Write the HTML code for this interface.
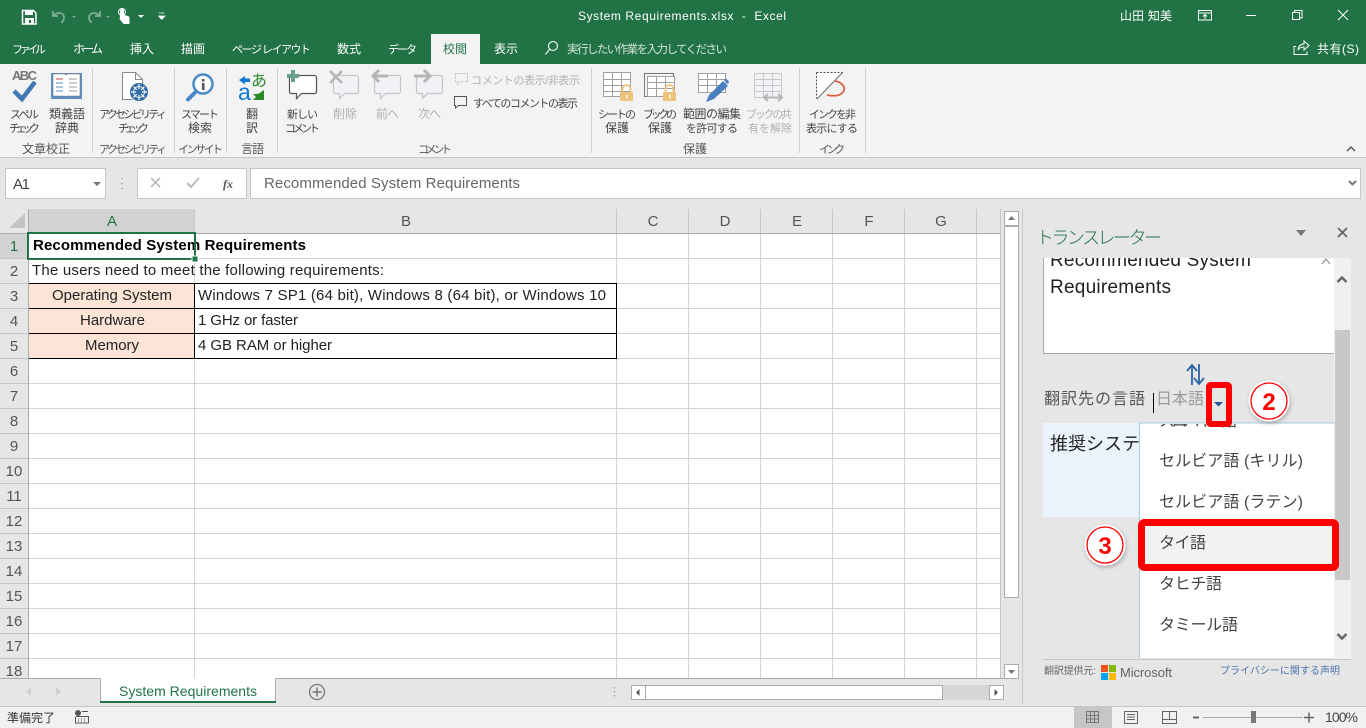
<!DOCTYPE html>
<html lang="ja">
<head>
<meta charset="utf-8">
<title>System Requirements.xlsx - Excel</title>
<style>
html,body{margin:0;padding:0;width:1366px;height:728px;overflow:hidden;background:#e6e6e6}
svg{display:block;position:absolute;left:0;top:0}
text{font-family:"Liberation Sans","Noto Sans CJK JP",sans-serif;font-size:12px;fill:#444;white-space:pre}
.w{fill:#fff}
.t{font-size:12px;fill:#fff}
.r{font-size:12px;fill:#444}
.d{font-size:12px;fill:#b1b1b1}
.g{font-size:12px;fill:#555}
.r.k,.d.k,.g.k,.t.k{font-size:11px}
.h{font-size:15px;fill:#555;text-anchor:middle}
.c{font-size:15px;fill:#222}
.m{text-anchor:middle}
.p{font-size:16px;fill:#444}
</style>
</head>
<body>
<svg width="1366" height="728" viewBox="0 0 1366 728" xmlns="http://www.w3.org/2000/svg">
<defs>
<clipPath id="cb"><rect x="1043" y="258" width="291" height="96"/></clipPath>
<clipPath id="cd"><rect x="1140" y="424" width="194" height="234"/></clipPath>
<clipPath id="ct"><rect x="1043" y="423" width="96" height="94"/></clipPath>
<filter id="sh" x="-30%" y="-30%" width="160%" height="160%"><feDropShadow dx="1" dy="2" stdDeviation="2" flood-color="#000" flood-opacity=".25"/></filter>
</defs>

<!-- title bar -->
<rect x="0" y="0" width="1366" height="64" fill="#217346"/>
<rect x="431" y="34" width="49" height="30" fill="#f3f3f3"/>
<!-- QAT -->
<path d="M22.500 10.500h11l2.500 2.500v11h-13.500z" fill="none" stroke="#fff" stroke-width="1.500"/>
<rect x="25" y="11" width="8" height="4" fill="#fff"/><rect x="25" y="18" width="9" height="6" fill="#fff"/><rect x="29" y="20" width="2" height="3" fill="#217346"/>
<path d="M53 11v5h5M54 15.500c3-4 10-3 10 2 0 2-1 4-3 5" fill="none" stroke="#7fad96" stroke-width="1.800"/>
<path d="M72 16l4 0-2 2z" fill="#7fad96"/>
<path d="M100 11v5h-5M99 15.500c-3-4-10-3-10 2 0 2 1 4 3 5" fill="none" stroke="#7fad96" stroke-width="1.800"/>
<path d="M106 16l4 0-2 2z" fill="#7fad96"/>
<path d="M120 17v-6a2 2 0 0 1 4 0v4l4 1c1.500.500 1.500 2 1.500 3v5h-6l-4-5z" fill="#fff"/><circle cx="122" cy="12" r="3.500" fill="none" stroke="#fff"/>
<path d="M138 15h6l-3 3z" fill="#fff"/>
<path d="M159 13h5.500M158.500 16h6.500l-3.200 3.500z" fill="#fff" stroke="#fff" stroke-width=".7"/>
<text class="t" x="578" y="20" textLength="208">System Requirements.xlsx  -  Excel</text>
<text class="t" x="1120" y="20" textLength="52">山田 知美</text>
<path d="M1198.500 10.500h13v9.500h-13zM1198.500 13h13M1205 19v-4M1203 16.500l2-2 2 2" fill="none" stroke="#fff"/>
<path d="M1246 15.500h10" stroke="#fff"/>
<path d="M1292.500 12.500h7v7h-7zM1294.500 12.500v-2h7.500v7.500h-2.500" fill="none" stroke="#fff"/>
<path d="M1338 10l10 10M1348 10l-10 10" stroke="#fff" fill="none"/>
<!-- tabs -->
<text class="t k" x="12" y="53" textLength="34">ファイル</text>
<text class="t" x="73" y="53" textLength="30">ホーム</text>
<text class="t" x="130" y="53" textLength="24">挿入</text>
<text class="t" x="181" y="53" textLength="24">描画</text>
<text class="t k" x="232" y="53" textLength="79">ページ レイアウト</text>
<text class="t" x="337" y="53" textLength="24">数式</text>
<text class="t k" x="388" y="53" textLength="29">データ</text>
<text x="443" y="53" textLength="24" style="fill:#217346">校閲</text>
<text class="t" x="494" y="53" textLength="24">表示</text>
<circle cx="553" cy="46" r="4.500" fill="none" stroke="#e4efe9" stroke-width="1.200"/><path d="M549.500 49.500l-4 5" stroke="#e4efe9" stroke-width="1.300"/>
<text x="567" y="53" textLength="160" style="fill:#d3e4da;font-size:11.500px">実行したい作業を入力してください</text>
<path d="M1296 46.500h-2v8h13v-3M1298 50c0-4 3-6 6-6v-3l5 4.500-5 4.500v-3c-3 0-5 1-6 3z" fill="none" stroke="#fff"/>
<text class="t" x="1317" y="53" textLength="42">共有(S)</text>

<!-- ribbon -->
<rect x="0" y="64" width="1366" height="93" fill="#f3f3f3"/>
<rect x="0" y="157" width="1366" height="1" fill="#c6c6c6"/>
<path d="M92.500 68v85M174.500 68v85M226.500 68v85M277.500 68v85M591.500 68v85M799.500 68v85M865.500 68v85" stroke="#d0d0d0"/>

<!-- spell -->
<text x="12" y="80" textLength="25" style="font-size:13px;font-weight:bold;fill:#777">ABC</text>
<path d="M14 91l8 8 13-17" fill="none" stroke="#3f78b5" stroke-width="4.500"/>
<!-- thesaurus -->
<rect x="51" y="73" width="31" height="26" fill="#5b8fc5"/>
<path d="M53 74h12l1 1 1-1h13v22H67l-1 1-1-1H53z" fill="#fff" stroke="#777" stroke-width=".6"/>
<path d="M56 79h7" stroke="#d9453a"/><path d="M56 83h7M56 87h7M56 91h7" stroke="#5b8fc5"/><path d="M69 79h8M69 83h8M69 87h8M69 91h8" stroke="#9a9a9a"/>
<!-- accessibility -->
<path d="M122.500 72.500h13l7 7v7M122.500 72.500v27h10" fill="#fff" stroke="#888"/><path d="M135.500 72.500v7h7" fill="none" stroke="#888"/>
<rect x="123" y="73" width="12" height="26" fill="#fff"/>
<path d="M122.500 72.500v27h9M122.500 72.500h13" fill="none" stroke="#888"/>
<circle cx="139" cy="92" r="9" fill="#2f6ca6"/><path d="M139 84v16M131 92h16M133.500 86.500l11 11M144.500 86.500l-11 11" stroke="#fff" stroke-width="1.200"/><circle cx="139" cy="92" r="3" fill="#2f6ca6"/><circle cx="139" cy="92" r="5.500" fill="none" stroke="#fff" stroke-width=".8"/>
<!-- smart lookup -->
<circle cx="203" cy="84" r="9.500" fill="#fff" stroke="#4a89c5" stroke-width="2.500"/>
<rect x="202" y="83" width="2.500" height="7" fill="#555"/><rect x="202" y="79" width="2.500" height="2.500" fill="#555"/>
<path d="M196 91.500l-8 8" stroke="#4a89c5" stroke-width="4" stroke-linecap="round"/>
<!-- translate -->
<path d="M239 80l6-4v2.500h5v3.500h-5v2.500z" fill="#0e78d5"/>
<text x="238" y="100" textLength="14" style="font-size:23px;fill:#0e78d5">a</text>
<text x="251" y="86" style="font-size:16px;fill:#2a8a2a">あ</text>
<path d="M264 90v10h-11l3-3-3-3h4l3-1 1-1z" fill="#2a8a2a"/>
<!-- new comment -->
<path d="M290.500 75.500h24a2 2 0 0 1 2 2v14a2 2 0 0 1-2 2h-13l-5 5v-5h-5a2 2 0 0 1-2-2v-14z" fill="#fff" stroke="#555" stroke-width="1.200"/>
<path d="M293 70v12M287 76h12" stroke="#68a08f" stroke-width="4"/>
<!-- delete -->
<path d="M333.500 75.500h23a2 2 0 0 1 2 2v14a2 2 0 0 1-2 2h-12l-5 5v-5h-4a2 2 0 0 1-2-2z" fill="#f4f1f6" stroke="#c4c4c4" stroke-width="1.200"/>
<path d="M330 71l12 12M342 71l-12 12" stroke="#b5b5b5" stroke-width="2.500"/>
<!-- prev -->
<path d="M374.500 75.500h24a2 2 0 0 1 2 2v14a2 2 0 0 1-2 2h-13l-5 5v-5h-4a2 2 0 0 1-2-2z" fill="#f4f1f6" stroke="#c4c4c4" stroke-width="1.200"/>
<path d="M372 76h16M379 70l-6 6 6 6" fill="none" stroke="#b5b5b5" stroke-width="3"/>
<!-- next -->
<path d="M416.500 75.500h24a2 2 0 0 1 2 2v14a2 2 0 0 1-2 2h-13l-5 5v-5h-4a2 2 0 0 1-2-2z" fill="#f4f1f6" stroke="#c4c4c4" stroke-width="1.200"/>
<path d="M414 76h16M424 70l6 6-6 6" fill="none" stroke="#b5b5b5" stroke-width="3"/>
<!-- show comments -->
<path d="M455.500 73.500h12v8h-7l-3 3v-3h-2z" fill="none" stroke="#c2c2c2" stroke-dasharray="2 1"/>
<path d="M454.500 96.500h12v9h-8l-3 2.500v-2.500h-1z" fill="none" stroke="#555"/>
<text class="d k" x="471" y="84" textLength="109">コメントの表示/非表示</text>
<text class="r k" x="473" y="107" textLength="105">すべてのコメントの表示</text>
<!-- sheets -->
<path d="M603.500 72.500h27v24h-27zM603.500 79.500h27M603.500 85.500h27M603.500 91.500h27M612.500 72.500v24M621.500 72.500v24" fill="#fff" stroke="#a0a0a0"/>
<rect x="620" y="92" width="13" height="9" rx="1" fill="#edc27c"/><path d="M622.500 92v-3a4 4 0 0 1 8 0v3" fill="none" stroke="#edc27c" stroke-width="1.800"/><rect x="626" y="95" width="1.500" height="3.500" fill="#fff"/>
<path d="M644.500 73.500h29v23h-29z" fill="#f3f3f3" stroke="#777"/>
<path d="M647.500 76.500h27v20h-27zM647.500 82.500h27M647.500 88.500h27M656.500 76.500v20M665.500 76.500v20" fill="#fff" stroke="#a0a0a0"/>
<rect x="663" y="92" width="13" height="9" rx="1" fill="#edc27c"/><path d="M665.500 92v-3a4 4 0 0 1 8 0v3" fill="none" stroke="#edc27c" stroke-width="1.800"/><rect x="669" y="95" width="1.500" height="3.500" fill="#fff"/>
<path d="M698.500 73.500h27v19h-27zM698.500 79.500h27M698.500 85.500h27M707.500 73.500v19M716.500 73.500v19" fill="#fff" stroke="#a0a0a0"/>
<path d="M706 102l3-7 14-14 5 5-14 13z" fill="#4a80c0"/><path d="M724 80l2-1.500 3 3-1 3z" fill="#4a80c0"/>
<path d="M754.500 73.500h27v24h-27zM754.500 79.500h27M754.500 85.500h27M754.500 91.500h27M763.500 73.500v24M772.500 73.500v24" fill="#f4f1f6" stroke="#c8c8c8"/>
<path d="M766 97.500h14M768 94l-4 3.500 4 3.500M778 94l4 3.500-4 3.500" fill="none" stroke="#b5b5b5" stroke-width="2"/>
<!-- ink -->
<path d="M816.500 72.500h26l-26 26z" fill="#fff"/>
<path d="M816.500 72.500h26M816.500 72.500v26" fill="none" stroke="#555" stroke-dasharray="2 1.500"/>
<path d="M843 72l-26 27" stroke="#777" stroke-width="1.200"/>
<path d="M835 81c6 1 10 5 9 9-1 5-8 7-17 5" fill="none" stroke="#d9603c" stroke-width="1.800"/>

<!-- ribbon labels -->
<text class="r k" x="10" y="118" textLength="29">スペル</text>
<text class="r k" x="9" y="132" textLength="31">チェック</text>
<text class="r" x="49" y="118" textLength="36">類義語</text>
<text class="r" x="55" y="132" textLength="24">辞典</text>
<text class="r k" x="99" y="118" textLength="68">アクセシビリティ</text>
<text class="r k" x="118" y="132" textLength="31">チェック</text>
<text class="r k" x="181" y="118" textLength="38">スマート</text>
<text class="r" x="188" y="132" textLength="24">検索</text>
<text class="r" x="246" y="118">翻</text>
<text class="r" x="246" y="132">訳</text>
<text class="r k" x="287" y="118" textLength="31">新しい</text>
<text class="r k" x="285" y="132" textLength="35">コメント</text>
<text class="d" x="333" y="118" textLength="24">削除</text>
<text class="d" x="376" y="118" textLength="23">前へ</text>
<text class="d" x="418" y="118" textLength="23">次へ</text>
<text class="r k" x="598" y="118" textLength="38">シートの</text>
<text class="r" x="605" y="132" textLength="24">保護</text>
<text class="r k" x="643" y="118" textLength="34">ブックの</text>
<text class="r" x="648" y="132" textLength="24">保護</text>
<text class="r" x="683" y="118" textLength="58">範囲の編集</text>
<text class="r k" x="686" y="132" textLength="52">を許可する</text>
<text class="d k" x="746" y="118" textLength="46">ブックの共</text>
<text class="d k" x="748" y="132" textLength="44">有を解除</text>
<text class="r k" x="809" y="118" textLength="47">インクを非</text>
<text class="r k" x="806" y="132" textLength="52">表示にする</text>
<text class="g" x="22" y="153" textLength="48">文章校正</text>
<text class="g k" x="99" y="153" textLength="68">アクセシビリティ</text>
<text class="g k" x="178" y="153" textLength="45">インサイト</text>
<text class="g" x="241" y="153" textLength="23">言語</text>
<text class="g k" x="418" y="153" textLength="34">コメント</text>
<text class="g" x="683" y="153" textLength="24">保護</text>
<text class="g k" x="819" y="153" textLength="26">インク</text>
<path d="M1347 151l4-4 4 4" fill="none" stroke="#666" stroke-width="1.600"/>

<!-- formula bar -->
<rect x="5.500" y="168.500" width="100" height="30" fill="#fff" stroke="#c6c6c6"/>
<text x="13" y="189" textLength="17" style="font-size:15px;fill:#444">A1</text>
<path d="M93 182h8l-4 4z" fill="#777"/>
<path d="M122 178v1M122 183v1M122 188v1" stroke="#999" stroke-width="1.500"/>
<rect x="137.500" y="168.500" width="109" height="30" fill="#fff" stroke="#c6c6c6"/>
<path d="M151 178l9 9M160 178l-9 9" stroke="#bbb" stroke-width="1.600"/>
<path d="M187 183l4 4 8-9" fill="none" stroke="#bbb" stroke-width="2"/>
<text x="223" y="188" style="font-family:'Liberation Serif',serif;font-style:italic;font-weight:bold;font-size:12px;fill:#555">fx</text>
<rect x="250.500" y="168.500" width="1110" height="30" fill="#fff" stroke="#c6c6c6"/>
<text x="264" y="188" textLength="256" style="font-size:15px;fill:#666">Recommended System Requirements</text>
<path d="M1349 181l3.500 3.500 3.500-3.500" fill="none" stroke="#777" stroke-width="2"/>

<!-- sheet -->
<rect x="0" y="209" width="1022" height="497" fill="#e6e6e6"/>
<rect x="29" y="234" width="972" height="444" fill="#fff"/>
<rect x="29" y="209" width="166" height="24" fill="#d2d2d2"/>
<rect x="0" y="234" width="28" height="24" fill="#d2d2d2"/>
<path d="M25 213v15H9z" fill="#c4c4c4"/>
<path d="M28.500 209v469M0 233.500h1001" stroke="#ababab"/>
<path d="M194.500 209v24M616.500 209v24M688.500 209v24M760.500 209v24M832.500 209v24M904.500 209v24M976.500 209v24" stroke="#c6c6c6"/>
<path d="M0 258.500h28M0 283.500h28M0 308.500h28M0 333.500h28M0 358.500h28M0 383.500h28M0 408.500h28M0 433.500h28M0 458.500h28M0 483.500h28M0 508.500h28M0 533.500h28M0 558.500h28M0 583.500h28M0 608.500h28M0 633.500h28M0 658.500h28" stroke="#c6c6c6"/>
<path d="M29 258.500h972M29 283.500h972M29 308.500h972M29 333.500h972M29 358.500h972M29 383.500h972M29 408.500h972M29 433.500h972M29 458.500h972M29 483.500h972M29 508.500h972M29 533.500h972M29 558.500h972M29 583.500h972M29 608.500h972M29 633.500h972M29 658.500h972" stroke="#d4d4d4"/>
<path d="M194.500 284v394M616.500 234v444M688.500 234v444M760.500 234v444M832.500 234v444M904.500 234v444M976.500 234v444" stroke="#d4d4d4"/>
<path d="M194.500 234v50" stroke="#d4d4d4"/>
<rect x="29" y="284" width="165" height="74" fill="#fce4d6"/>
<path d="M29 283.500h588M29 308.500h588M29 333.500h588M29 358.500h588M194.500 283v76M616.500 283v76" stroke="#000"/>
<text class="h" x="112" y="226" style="fill:#217346">A</text>
<text class="h" x="406" y="226">B</text><text class="h" x="653" y="226">C</text><text class="h" x="725" y="226">D</text><text class="h" x="797" y="226">E</text><text class="h" x="869" y="226">F</text><text class="h" x="941" y="226">G</text>
<text class="h" x="14" y="251" style="fill:#217346">1</text>
<text class="h" x="14" y="276">2</text><text class="h" x="14" y="301">3</text><text class="h" x="14" y="326">4</text><text class="h" x="14" y="351">5</text><text class="h" x="14" y="376">6</text><text class="h" x="14" y="401">7</text><text class="h" x="14" y="426">8</text><text class="h" x="14" y="451">9</text><text class="h" x="14" y="476">10</text><text class="h" x="14" y="501">11</text><text class="h" x="14" y="526">12</text><text class="h" x="14" y="551">13</text><text class="h" x="14" y="576">14</text><text class="h" x="14" y="601">15</text><text class="h" x="14" y="626">16</text><text class="h" x="14" y="651">17</text><text class="h" x="14" y="676">18</text>
<text class="c" x="33" y="250" textLength="273" style="font-weight:bold;fill:#000">Recommended System Requirements</text>
<text class="c" x="32" y="275" textLength="352">The users need to meet the following requirements:</text>
<text class="c" x="52" y="300" textLength="120">Operating System</text>
<text class="c" x="198" y="300" textLength="408">Windows 7 SP1 (64 bit), Windows 8 (64 bit), or Windows 10</text>
<text class="c" x="80" y="325" textLength="65">Hardware</text>
<text class="c" x="198" y="325" textLength="100">1 GHz or faster</text>
<text class="c" x="85" y="350" textLength="54">Memory</text>
<text class="c" x="198" y="350" textLength="134">4 GB RAM or higher</text>
<rect x="28" y="233" width="167" height="26" fill="none" stroke="#217346" stroke-width="2"/>
<rect x="192" y="256" width="6" height="6" fill="#217346" stroke="#fff"/>

<!-- v scroll -->
<rect x="1001" y="209" width="21" height="497" fill="#e6e6e6"/>
<path d="M1000.500 209v469" stroke="#c6c6c6"/>
<rect x="1004.500" y="211.500" width="14" height="14" fill="#fff" stroke="#ababab"/>
<path d="M1008 220h7l-3.500-4z" fill="#777"/>
<rect x="1004.500" y="226.500" width="14" height="371" fill="#fff" stroke="#ababab"/>
<rect x="1004.500" y="664.500" width="14" height="14" fill="#fff" stroke="#ababab"/>
<path d="M1008 670h7l-3.500 4z" fill="#777"/>
<path d="M1022.500 209v495" stroke="#c6c6c6"/>

<!-- sheet tabs -->
<path d="M0 678.500h100.500M275.500 678.500h728" stroke="#ababab"/>
<path d="M100.500 678v25M275.500 678v25" stroke="#ababab"/>
<rect x="101" y="678" width="174" height="24" fill="#fff"/>
<rect x="100" y="701" width="176" height="2" fill="#217346"/>
<text x="119" y="696" textLength="138" style="font-size:14px;fill:#217346">System Requirements</text>
<path d="M31 687l-5 4.500 5 4.500z" fill="#d0d0d0"/><path d="M56 687l5 4.500-5 4.500z" fill="#d0d0d0"/>
<circle cx="317" cy="692" r="7.500" fill="none" stroke="#777" stroke-width="1.300"/>
<path d="M312.500 692h9M317 687.500v9" stroke="#777" stroke-width="1.500"/>
<path d="M614.500 687v1.500M614.500 691v1.500M614.500 695v1.500" stroke="#aaa" stroke-width="1.500"/>
<rect x="631" y="685" width="372" height="15" fill="#d6d6d6"/>
<rect x="631.500" y="685.500" width="14" height="14" fill="#fff" stroke="#ababab"/>
<path d="M639.500 689l-3.500 3.500 3.500 3.500z" fill="#555"/>
<rect x="645.500" y="685.500" width="297" height="14" fill="#fff" stroke="#ababab"/>
<rect x="989.500" y="685.500" width="14" height="14" fill="#fff" stroke="#ababab"/>
<path d="M994.500 689l3.500 3.500-3.500 3.500z" fill="#555"/>

<!-- status bar -->
<rect x="0" y="706" width="1366" height="22" fill="#f1f1f1"/>
<rect x="0" y="706" width="1366" height="1" fill="#c6c6c6"/>
<text x="7" y="722" textLength="48" style="font-size:12px;fill:#333">準備完了</text>
<circle cx="78" cy="713" r="3" fill="#555"/>
<path d="M82 711.500h6M76 716.500h12.500v6.500h-13v-6" fill="none" stroke="#555"/>
<path d="M78 719h1M81 719h1M84 719h1M78 721h1M81 721h1M84 721h1" stroke="#555"/>
<rect x="1074" y="707" width="38" height="21" fill="#c6c6c6"/>
<path d="M1086.500 711.500h12v11h-12zM1086.500 715.500h12M1086.500 719h12M1090.500 711.500v11M1094.500 711.500v11" fill="none" stroke="#777"/>
<path d="M1124.500 711.500h13v12h-13zM1127 714.500h8M1127 717h8M1127 719.500h8" fill="none" stroke="#666"/>
<path d="M1162.500 711.500h14v12h-14zM1162.500 719.500h14M1169.500 711.500v8" fill="none" stroke="#666"/>
<path d="M1193 717.500h6" stroke="#666" stroke-width="2"/>
<path d="M1203 717.500h100" stroke="#aaa"/>
<rect x="1251" y="711" width="5" height="12" fill="#777"/>
<path d="M1304 717.500h10M1309 712.500v10" stroke="#666" stroke-width="1.500"/>
<text x="1325" y="722" textLength="33" style="font-size:14px;fill:#444">100%</text>

<!-- pane -->
<rect x="1023" y="209" width="343" height="497" fill="#e6e6e6"/>
<text x="1036" y="244" textLength="126" style="font-size:18px;fill:#217346;font-weight:300">トランスレーター</text>
<path d="M1296 230h10l-5 6z" fill="#777"/>
<path d="M1338 228l9 9M1347 228l-9 9" stroke="#666" stroke-width="1.800"/>
<rect x="1043" y="258" width="291" height="96" fill="#fff"/>
<path d="M1043.500 258v95.500h291" fill="none" stroke="#aaa"/>
<g clip-path="url(#cb)">
<text x="1050" y="266" textLength="201" style="font-size:19px;fill:#222">Recommended System</text>
<text x="1050" y="293" textLength="121" style="font-size:19px;fill:#222">Requirements</text>
<path d="M1322 264l4-5 4 5" fill="none" stroke="#777"/>
</g>
<rect x="1334" y="258" width="17" height="401" fill="#f0f0f0"/>
<rect x="1335" y="330" width="15" height="250" fill="#c8c8c8"/>
<path d="M1337.500 282l4.500-4.500 4.500 4.500" fill="none" stroke="#666" stroke-width="2.500"/>
<path d="M1337.500 634l4.500 4.500 4.500-4.500" fill="none" stroke="#666" stroke-width="2.500"/>
<path d="M1192 385v-19M1187 371l5-6 5 6" fill="none" stroke="#2b62a8" stroke-width="1.800"/>
<path d="M1199 364v19M1194 378l5 6 5-6" fill="none" stroke="#2b62a8" stroke-width="1.800"/>
<text x="1044" y="404" textLength="101" style="font-size:16px;fill:#555">翻訳先の言語</text>
<path d="M1153.500 393v20" stroke="#000"/>
<text x="1156" y="404" textLength="48" style="font-size:16px;fill:#999">日本語</text>
<rect x="1043" y="423" width="96" height="94" fill="#ebf3fc"/>
<g clip-path="url(#ct)"><text x="1050" y="450" style="font-size:18px;fill:#222">推奨システム要件</text></g>
<rect x="1139" y="423" width="195" height="235" fill="#fff"/>
<path d="M1139.500 658v-235h195" fill="none" stroke="#a8cbd9"/>
<g clip-path="url(#cd)"><text x="1159" y="426" textLength="78" style="font-size:16px;fill:#444">スロバキア語</text></g>
<text class="p" x="1159" y="466" textLength="144">セルビア語 (キリル)</text>
<text class="p" x="1159" y="507" textLength="144">セルビア語 (ラテン)</text>
<rect x="1140" y="524" width="196" height="44" fill="#f2f2f2"/>
<text class="p" x="1159" y="548" textLength="47">タイ語</text>
<text class="p" x="1159" y="589" textLength="63">タヒチ語</text>
<text class="p" x="1159" y="630" textLength="79">タミール語</text>
<path d="M1043 659.500h308" stroke="#c6c6c6"/>
<text x="1044" y="674" textLength="52" style="font-size:10px;fill:#666">翻訳提供元:</text>
<rect x="1101" y="665" width="7" height="7" fill="#f25022"/><rect x="1109" y="665" width="7" height="7" fill="#7fba00"/><rect x="1101" y="673" width="7" height="7" fill="#00a4ef"/><rect x="1109" y="673" width="7" height="7" fill="#ffb900"/>
<text x="1120" y="677" textLength="52" style="font-size:13px;fill:#666">Microsoft</text>
<text x="1220" y="674" textLength="120" style="font-size:10px;fill:#4a74ac">プライバシーに関する声明</text>

<!-- annotations -->
<rect x="1209" y="385" width="20" height="39" rx="1.500" fill="#e6e6e6" stroke="#f00" stroke-width="6"/>
<path d="M1214 402h9l-4.500 4.500z" fill="#2b579a"/>
<circle cx="1269" cy="401" r="20.500" fill="#fff" filter="url(#sh)"/>
<circle cx="1269" cy="401" r="18" fill="none" stroke="#f00" stroke-width="1.300"/>
<text x="1269" y="410" class="m" style="font-size:24px;font-weight:bold;fill:#f00">2</text>
<rect x="1141.500" y="522.500" width="194" height="45" rx="3" fill="none" stroke="#f00" stroke-width="7"/>
<circle cx="1105" cy="545" r="20.500" fill="#fff" filter="url(#sh)"/>
<circle cx="1105" cy="545" r="18" fill="none" stroke="#f00" stroke-width="1.300"/>
<text x="1105" y="554" class="m" style="font-size:24px;font-weight:bold;fill:#f00">3</text>
</svg>
</body>
</html>
